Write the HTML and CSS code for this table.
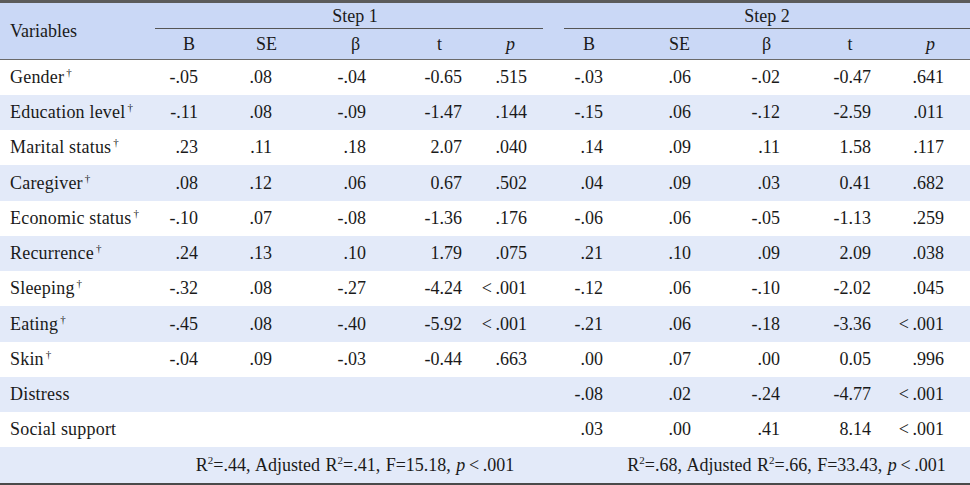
FILE: index.html
```html
<!DOCTYPE html>
<html>
<head>
<meta charset="utf-8">
<link rel="stylesheet" href="styles.css">
</head>
<body>
<table class="tbl">
  <colgroup>
    <col class="c-var"><col class="c-b1"><col class="c-se1"><col class="c-be1"><col class="c-t1"><col class="c-p1">
    <col class="c-b2"><col class="c-se2"><col class="c-be2"><col class="c-t2"><col class="c-p2">
  </colgroup>
  <thead>
    <tr class="h1">
      <th rowspan="2" class="var-h">Variables</th>
      <th colspan="5" class="step"><div class="step-in s1">Step 1</div></th>
      <th colspan="5" class="step"><div class="step-in s2">Step 2</div></th>
    </tr>
    <tr class="h2">
      <th>B</th><th>SE</th><th>β</th><th>t</th><th><i>p</i></th>
      <th>B</th><th>SE</th><th>β</th><th>t</th><th><i>p</i></th>
    </tr>
  </thead>
  <tbody>
    <tr><td class="v">Gender<sup>†</sup></td><td>-.05</td><td>.08</td><td>-.04</td><td>-0.65</td><td>.515</td><td>-.03</td><td>.06</td><td>-.02</td><td>-0.47</td><td>.641</td></tr>
    <tr class="alt"><td class="v">Education level<sup>†</sup></td><td>-.11</td><td>.08</td><td>-.09</td><td>-1.47</td><td>.144</td><td>-.15</td><td>.06</td><td>-.12</td><td>-2.59</td><td>.011</td></tr>
    <tr><td class="v">Marital status<sup>†</sup></td><td>.23</td><td>.11</td><td>.18</td><td>2.07</td><td>.040</td><td>.14</td><td>.09</td><td>.11</td><td>1.58</td><td>.117</td></tr>
    <tr class="alt"><td class="v">Caregiver<sup>†</sup></td><td>.08</td><td>.12</td><td>.06</td><td>0.67</td><td>.502</td><td>.04</td><td>.09</td><td>.03</td><td>0.41</td><td>.682</td></tr>
    <tr><td class="v">Economic status<sup>†</sup></td><td>-.10</td><td>.07</td><td>-.08</td><td>-1.36</td><td>.176</td><td>-.06</td><td>.06</td><td>-.05</td><td>-1.13</td><td>.259</td></tr>
    <tr class="alt"><td class="v">Recurrence<sup>†</sup></td><td>.24</td><td>.13</td><td>.10</td><td>1.79</td><td>.075</td><td>.21</td><td>.10</td><td>.09</td><td>2.09</td><td>.038</td></tr>
    <tr><td class="v">Sleeping<sup>†</sup></td><td>-.32</td><td>.08</td><td>-.27</td><td>-4.24</td><td>&lt;&thinsp;.001</td><td>-.12</td><td>.06</td><td>-.10</td><td>-2.02</td><td>.045</td></tr>
    <tr class="alt"><td class="v">Eating<sup>†</sup></td><td>-.45</td><td>.08</td><td>-.40</td><td>-5.92</td><td>&lt;&thinsp;.001</td><td>-.21</td><td>.06</td><td>-.18</td><td>-3.36</td><td>&lt;&thinsp;.001</td></tr>
    <tr><td class="v">Skin<sup>†</sup></td><td>-.04</td><td>.09</td><td>-.03</td><td>-0.44</td><td>.663</td><td>.00</td><td>.07</td><td>.00</td><td>0.05</td><td>.996</td></tr>
    <tr class="alt"><td class="v">Distress</td><td></td><td></td><td></td><td></td><td></td><td>-.08</td><td>.02</td><td>-.24</td><td>-4.77</td><td>&lt;&thinsp;.001</td></tr>
    <tr><td class="v">Social support</td><td></td><td></td><td></td><td></td><td></td><td>.03</td><td>.00</td><td>.41</td><td>8.14</td><td>&lt;&thinsp;.001</td></tr>
    <tr class="alt sum"><td class="v"></td><td colspan="5" class="sum1">R<sup>2</sup>=.44, Adjusted R<sup>2</sup>=.41, F=15.18, <i>p</i>&thinsp;&lt;&thinsp;.001</td><td colspan="5" class="sum2">R<sup>2</sup>=.68, Adjusted R<sup>2</sup>=.66, F=33.43, <i>p</i>&thinsp;&lt;&thinsp;.001</td></tr>
  </tbody>
</table>
</body>
</html>
```
FILE: styles.css
```css
html, body {
  margin: 0;
  padding: 0;
  background: #ffffff;
}
.tbl {
  width: 970px;
  table-layout: fixed;
  border-collapse: collapse;
  font-family: "Liberation Serif", "DejaVu Serif", serif;
  font-size: 18px;
  color: #1a1a1a;
  border-top: 3px solid #5b5b5b;
  border-bottom: 2px solid #4a4a4a;
}
.c-var { width: 155px; }
.c-b1 { width: 68px; }
.c-se1 { width: 87px; }
.c-be1 { width: 91px; }
.c-t1 { width: 77px; }
.c-p1 { width: 65px; }
.c-b2 { width: 92px; }
.c-se2 { width: 89px; }
.c-be2 { width: 85px; }
.c-t2 { width: 82px; }
.c-p2 { width: 79px; }

thead th {
  background: #cad8f6;
  font-weight: normal;
  padding: 0;
}
.h1 th { height: 26px; }
.h2 th {
  height: 30px;
  text-align: center;
  border-bottom: 1px solid #6a6a6a;
}
.var-h {
  text-align: left;
  padding-left: 10px !important;
  border-bottom: 1px solid #6a6a6a;
}
.step-in {
  border-bottom: 1.5px solid #555;
  height: 24px;
  line-height: 24px;
  text-align: center;
}
.s1 { margin-right: -12px; }
.s2 { margin-left: 21px; }

tbody td {
  height: 35px;
  padding: 0;
  text-align: right;
}
tbody tr:nth-child(4n) td { height: 36px; }
tbody tr.alt td { background: #e3eaf9; }
td.v {
  text-align: left;
  padding-left: 10px;
  white-space: nowrap;
  letter-spacing: 0.2px;
}
sup {
  font-size: 11px;
  vertical-align: 7px;
  line-height: 0;
  margin-left: 2px;
}
td:nth-child(2) { padding-right: 25px; }
td:nth-child(3) { padding-right: 38px; }
td:nth-child(4) { padding-right: 35px; }
td:nth-child(5) { padding-right: 16px; }
td:nth-child(6) { padding-right: 16px; }
td:nth-child(7) { padding-right: 32px; }
td:nth-child(8) { padding-right: 33px; }
td:nth-child(9) { padding-right: 29px; }
td:nth-child(10) { padding-right: 20px; }
td:nth-child(11) { padding-right: 26px; }

.sum td {
  word-spacing: 1px;
}
.sum td.sum1 {
  text-align: center;
  padding: 0 0 0 12px;
}
.sum td.sum2 {
  text-align: center;
  padding: 0 0 0 60px;
}
.sum sup { margin-left: 0; vertical-align: 7px; }
```
